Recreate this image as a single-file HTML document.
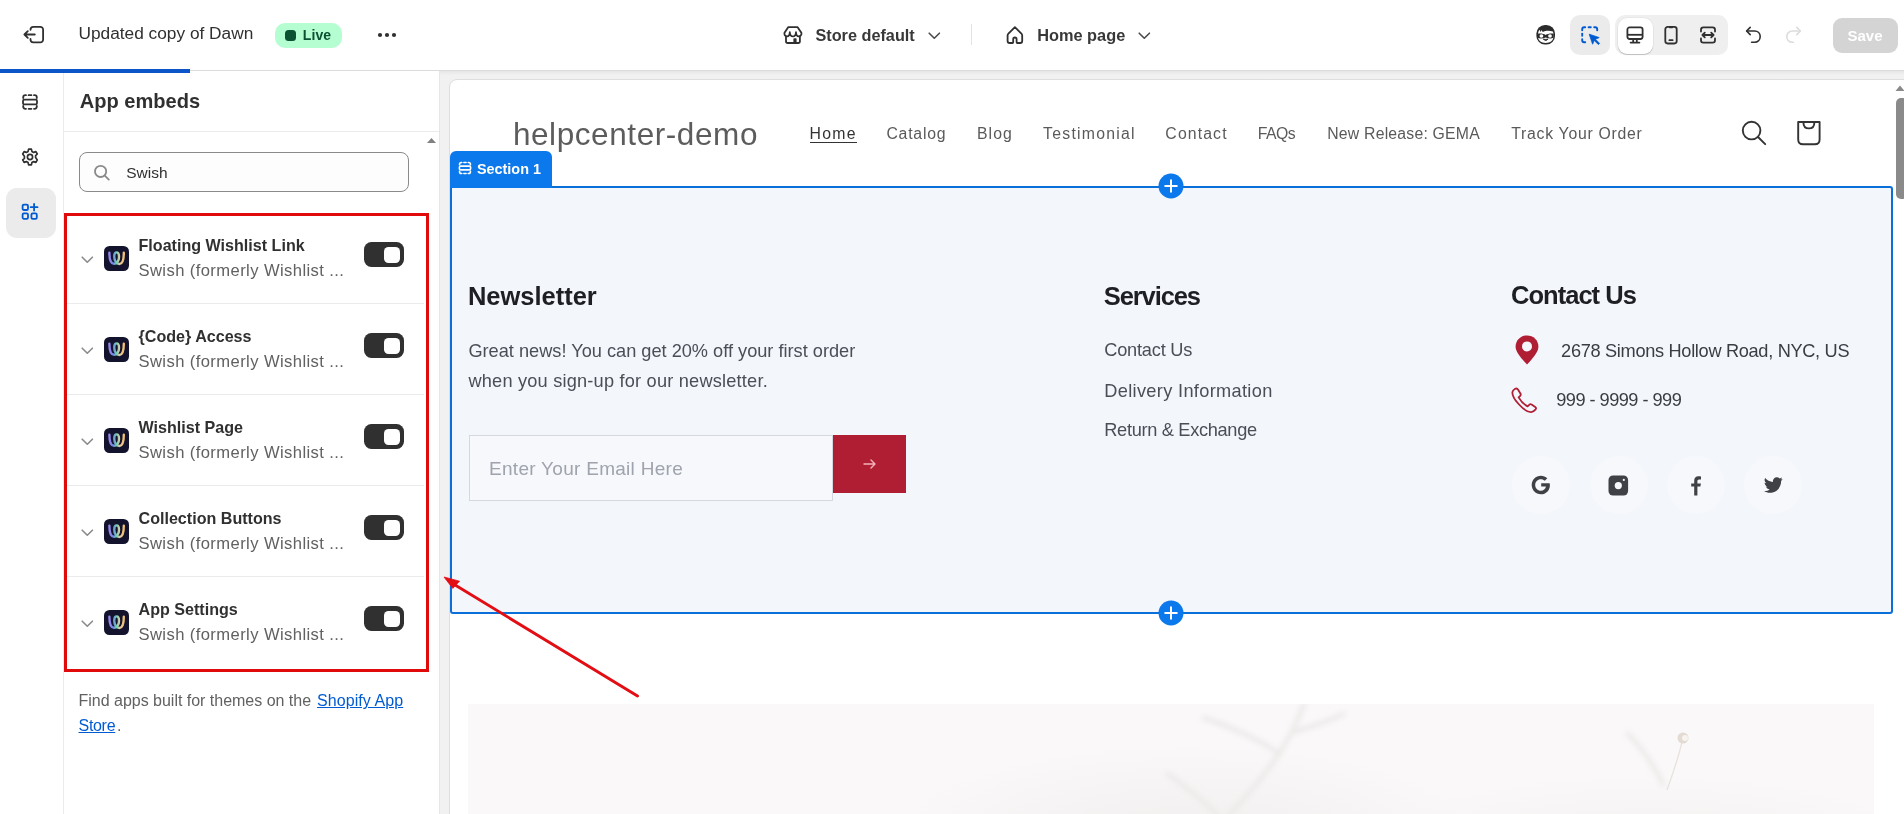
<!DOCTYPE html>
<html><head><meta charset="utf-8"><style>
html,body{margin:0;padding:0;width:1904px;height:814px;overflow:hidden;background:#fff;font-family:"Liberation Sans",sans-serif;}
.a{position:absolute;box-sizing:border-box;}
.t{position:absolute;white-space:nowrap;line-height:1;font-family:"Liberation Sans",sans-serif;}
svg{position:absolute;overflow:visible;}
</style></head><body>
<svg width="0" height="0" style="position:absolute"><defs><linearGradient id="wg" x1="0" y1="0" x2="1" y2="0"><stop offset="0" stop-color="#9c86e8"/><stop offset="0.25" stop-color="#6f86e6"/><stop offset="0.5" stop-color="#6fcfb0"/><stop offset="0.72" stop-color="#ecc9a4"/><stop offset="1" stop-color="#f0c070"/></linearGradient></defs></svg>
<!-- TOP BAR -->
<div class="a" style="left:0;top:70px;width:1904px;height:1px;background:#dcdcdc"></div>
<div class="a" style="left:0;top:69px;width:190px;height:4px;background:#0b55c8"></div>
<!-- exit icon -->
<svg style="left:23px;top:26px" width="22" height="18" viewBox="0 0 22 18"><g fill="none" stroke="#303030" stroke-width="1.8" stroke-linecap="round" stroke-linejoin="round"><path d="M7.5 3.8V3.6A2.8 2.8 0 0 1 10.3 0.9H17.3A2.8 2.8 0 0 1 20.1 3.7V13.6A2.8 2.8 0 0 1 17.3 16.4H10.3A2.8 2.8 0 0 1 7.5 13.6V13"/><path d="M11.8 8.5H1.6M4.8 5.2L1.4 8.5L4.8 11.8"/></g></svg>
<!-- live badge -->
<div class="a" style="left:275px;top:23px;width:67px;height:25px;border-radius:10px;background:#b4fed2"></div>
<div class="a" style="left:285px;top:30px;width:11px;height:11px;border-radius:3.5px;background:#0c5132"></div>
<!-- dots -->
<svg style="left:376px;top:31px" width="22" height="8"><circle cx="4" cy="4" r="2.1" fill="#303030"/><circle cx="11" cy="4" r="2.1" fill="#303030"/><circle cx="18" cy="4" r="2.1" fill="#303030"/></svg>
<!-- store icon -->
<svg style="left:783px;top:25px" width="20" height="20" viewBox="0 0 20 20"><g fill="none" stroke="#303030" stroke-width="1.8" stroke-linejoin="round"><path d="M5.2 2.2H14.6L18.4 7.8C18.9 9.9 17.4 11.3 15.6 11.3C14.0 11.3 13.2 10.2 13.0 7.2C12.8 10.4 11.7 11.4 9.9 11.4C8.2 11.4 7.0 10.4 6.8 7.2C6.6 10.2 5.8 11.3 4.2 11.3C2.4 11.3 0.9 9.9 1.5 7.8Z"/><path d="M3.0 11.2V16.2C3.0 17.2 3.7 18.0 4.8 18.0H15.1C16.2 18.0 16.9 17.2 16.9 16.2V11.2"/></g><rect x="10.4" y="13.2" width="3.2" height="5" rx="0.8" fill="#303030"/></svg>
<!-- chevron 1 -->
<svg style="left:927px;top:31px" width="15" height="10"><path d="M2.2 2.2L7.3 7.2L12.4 2.2" fill="none" stroke="#4a4a4a" stroke-width="1.6" stroke-linecap="round" stroke-linejoin="round"/></svg>
<div class="a" style="left:971px;top:24px;width:1px;height:21px;background:#e3e3e3"></div>
<!-- home icon -->
<svg style="left:1005px;top:25px" width="20" height="20" viewBox="0 0 20 20"><path d="M9.9 2.2L3.4 8.6C2.8 9.2 2.6 9.8 2.6 10.6V16.0C2.6 17.3 3.4 18.0 4.6 18.0H7.4C7.9 18.0 8.2 17.7 8.2 17.2V14.1C8.2 13.1 8.9 12.5 9.9 12.5C10.9 12.5 11.6 13.1 11.6 14.1V17.2C11.6 17.7 11.9 18.0 12.4 18.0H15.2C16.4 18.0 17.2 17.3 17.2 16.0V10.6C17.2 9.8 17.0 9.2 16.4 8.6Z" fill="none" stroke="#303030" stroke-width="1.8" stroke-linejoin="round"/></svg>
<svg style="left:1137px;top:31px" width="15" height="10"><path d="M2.2 2.2L7.3 7.2L12.4 2.2" fill="none" stroke="#4a4a4a" stroke-width="1.6" stroke-linecap="round" stroke-linejoin="round"/></svg>
<!-- robin icon -->
<svg style="left:1535.5px;top:24.8px" width="20" height="20" viewBox="0 0 20 20"><rect x="0.4" y="0" width="18.6" height="19.6" rx="8.6" fill="#2b2b2b"/><path d="M2.0 9.8C2.0 7.6 2.6 5.8 3.5 4.8L4.7 6.9L5.6 5.1L6.7 6.9C9.2 5.6 13.2 5.3 16.9 6.4C17.3 7.4 17.5 8.5 17.5 9.8V11.2C17.5 15.6 14.3 17.9 9.7 17.9C5.1 17.9 2.0 15.6 2.0 11.2Z" fill="#fff"/><path d="M1.8 8.8C4.8 8.2 7.8 9.0 9.7 10.0C11.6 9.0 14.6 8.2 17.7 8.8V12.8C15.2 14.0 12.2 13.6 9.7 12.6C7.2 13.6 4.2 14.0 1.8 12.8Z" fill="#2b2b2b"/><ellipse cx="5.4" cy="11.0" rx="1.9" ry="1.7" fill="#fff"/><ellipse cx="14.0" cy="11.0" rx="1.9" ry="1.7" fill="#fff"/><path d="M7.4 14.0C8.4 15.9 11.0 15.9 12.0 14.0C10.6 14.5 8.8 14.5 7.4 14.0Z" fill="#2b2b2b" stroke="#2b2b2b" stroke-width="0.9" stroke-linejoin="round"/></svg>
<!-- inspector button -->
<div class="a" style="left:1570px;top:15px;width:40px;height:40px;border-radius:10px;background:#ebebeb"></div>
<svg style="left:1580px;top:25px" width="22" height="22" viewBox="0 0 22 22"><g fill="none" stroke="#005bd3" stroke-width="1.9" stroke-linecap="round"><path d="M2.2 5.2V4.2C2.2 3.0 3.0 2.2 4.2 2.2H5.2"/><path d="M8.6 2.2H10.8"/><path d="M14.2 2.2H15.2C16.4 2.2 17.2 3.0 17.2 4.2V5.2"/><path d="M2.2 8.6V10.8"/><path d="M2.2 14.2V15.2C2.2 16.4 3.0 17.2 4.2 17.2H5.2"/></g><path d="M9.2 9.2L19.2 12.6L15.4 14.2L19.6 18.4L18.4 19.6L14.2 15.4L12.6 19.2Z" fill="#005bd3" stroke="#005bd3" stroke-width="0.8" stroke-linejoin="round"/></svg>
<!-- device group -->
<div class="a" style="left:1615px;top:15px;width:113px;height:40px;border-radius:10px;background:#efefef"></div>
<div class="a" style="left:1617.5px;top:17.5px;width:35.5px;height:36px;border-radius:9px;background:#fff;box-shadow:0 1px 1px rgba(0,0,0,0.18),0 0 0 0.5px rgba(0,0,0,0.06)"></div>
<svg style="left:1625px;top:25px" width="20" height="20" viewBox="0 0 20 20"><g fill="none" stroke="#303030" stroke-width="1.8" stroke-linejoin="round"><rect x="2.4" y="2.4" width="15.2" height="11.6" rx="2.2"/><path d="M2.6 9.8H17.4"/><path d="M8.2 14.4V17.4M11.8 14.4V17.4M5.6 17.6H14.4" stroke-linecap="round"/></g></svg>
<svg style="left:1661px;top:25px" width="20" height="20" viewBox="0 0 20 20"><g fill="none" stroke="#303030" stroke-width="1.8"><rect x="4.3" y="1.9" width="11.4" height="16.6" rx="2.4"/><path d="M8.4 15.2H11.6" stroke-linecap="round"/><path d="M8.6 2.6H11.4" stroke-linecap="round" stroke-width="1.4"/></g></svg>
<svg style="left:1698px;top:25px" width="20" height="20" viewBox="0 0 20 20"><g fill="none" stroke="#303030" stroke-width="1.8" stroke-linecap="round" stroke-linejoin="round"><path d="M3.0 6.6V4.8C3.0 3.3 3.9 2.4 5.4 2.4H14.6C16.1 2.4 17.0 3.3 17.0 4.8V6.6"/><path d="M3.0 13.4V15.2C3.0 16.7 3.9 17.6 5.4 17.6H14.6C16.1 17.6 17.0 16.7 17.0 15.2V13.4"/><path d="M4.4 10H15.6M6.8 7.6L4.4 10L6.8 12.4M13.2 7.6L15.6 10L13.2 12.4"/></g></svg>
<!-- undo/redo -->
<svg style="left:1744px;top:25px" width="20" height="20" viewBox="0 0 20 20"><g fill="none" stroke="#303030" stroke-width="1.6" stroke-linecap="round" stroke-linejoin="round"><path d="M6.2 2.4L2.6 6.0L6.2 9.6"/><path d="M2.8 6.0H10.6C13.8 6.0 16.2 8.4 16.2 11.6C16.2 14.8 13.8 17.2 10.6 17.2H7.6"/></g></svg>
<svg style="left:1783px;top:25px" width="20" height="20" viewBox="0 0 20 20"><g fill="none" stroke="#dcdcdc" stroke-width="1.6" stroke-linecap="round" stroke-linejoin="round"><path d="M13.8 2.4L17.4 6.0L13.8 9.6"/><path d="M17.2 6.0H9.4C6.2 6.0 3.8 8.4 3.8 11.6C3.8 14.8 6.2 17.2 9.4 17.2H10.4"/></g></svg>
<!-- save -->
<div class="a" style="left:1833px;top:18px;width:65px;height:35px;border-radius:9px;background:#d4d4d4"></div>

<!-- LEFT RAIL -->
<div class="a" style="left:63px;top:73px;width:1px;height:741px;background:#ebebeb"></div>
<svg style="left:20px;top:92px" width="20" height="20" viewBox="0 0 20 20"><g fill="none" stroke="#303030" stroke-width="1.8" stroke-linecap="round"><path d="M3.2 6.0V5.4C3.2 4.0 4.0 3.2 5.4 3.2H6.0"/><path d="M8.6 3.2H11.4"/><path d="M14.0 3.2H14.6C16.0 3.2 16.8 4.0 16.8 5.4V6.0"/><path d="M3.2 14.0V14.6C3.2 16.0 4.0 16.8 5.4 16.8H6.0"/><path d="M8.6 16.8H11.4"/><path d="M14.0 16.8H14.6C16.0 16.8 16.8 16.0 16.8 14.6V14.0"/></g><rect x="3.0" y="7.6" width="14" height="4.8" rx="1.4" fill="none" stroke="#303030" stroke-width="1.8"/></svg>
<svg style="left:20px;top:147px" width="20" height="20" viewBox="0 0 20 20"><g fill="none" stroke="#303030" stroke-width="1.7" stroke-linejoin="round"><path d="M8.6 2.1H11.4L11.9 4.4L13.7 5.4L15.9 4.6L17.3 7.0L15.6 8.6V10.6L17.3 12.9L15.9 15.4L13.7 14.6L11.9 15.6L11.4 17.9H8.6L8.1 15.6L6.3 14.6L4.1 15.4L2.7 12.9L4.4 11.4V9.2L2.7 7.0L4.1 4.6L6.3 5.4L8.1 4.4Z"/><circle cx="10" cy="10" r="2.6"/></g></svg>
<div class="a" style="left:6px;top:188px;width:50px;height:50px;border-radius:11px;background:#ebebeb"></div>
<svg style="left:20px;top:202px" width="20" height="20" viewBox="0 0 20 20"><g fill="none" stroke="#005bd3" stroke-width="1.8" stroke-linejoin="round"><rect x="2.6" y="2.6" width="5.4" height="5.4" rx="1.3"/><rect x="2.6" y="11.4" width="5.4" height="5.4" rx="1.3"/><rect x="11.4" y="11.4" width="5.4" height="5.4" rx="1.3"/><path d="M14.1 1.8V8.6M10.7 5.2H17.5" stroke-linecap="round"/></g></svg>

<!-- PANEL -->
<div class="a" style="left:64px;top:131px;width:375px;height:1px;background:#ebebeb"></div>
<svg style="left:426px;top:137px" width="11" height="7"><path d="M1 6L5.5 1L10 6Z" fill="#808080"/></svg>
<div class="a" style="left:79px;top:152px;width:330px;height:40px;border-radius:8px;border:1px solid #8a8a8a;background:#fdfdfd"></div>
<svg style="left:92px;top:163px" width="20" height="20" viewBox="0 0 20 20"><g fill="none" stroke="#8a8a8a" stroke-width="1.8" stroke-linecap="round"><circle cx="8.6" cy="8.4" r="5.6"/><path d="M12.8 12.6L16.8 16.6"/></g></svg>
<!-- items -->
<svg style="left:80px;top:255px" width="15" height="10"><path d="M2.2 2.2L7.3 7.2L12.4 2.2" fill="none" stroke="#8a8a8a" stroke-width="1.6" stroke-linecap="round" stroke-linejoin="round"/></svg>
<svg style="left:104px;top:246px" width="25" height="25" viewBox="0 0 25 25"><rect width="25" height="25" rx="5.5" fill="#13132e"/><path d="M5.4 6.8C5.4 13 6.8 17.8 10 17.8C12.6 17.8 15.0 15.2 15.0 11.0C15.0 8.2 13.9 6.4 12.6 6.4C11.2 6.4 10.2 8.0 10.2 10.4C10.2 15.0 12.6 18.0 15.4 18.0C18.6 18.0 19.8 13.2 19.8 6.8" fill="none" stroke="url(#wg)" stroke-width="2.4" stroke-linecap="round" stroke-linejoin="round"/></svg>
<div class="a" style="left:364px;top:242px;width:40px;height:25px;border-radius:7.5px;background:#303030"></div>
<div class="a" style="left:384px;top:247px;width:15.5px;height:15.5px;border-radius:4.5px;background:#fff"></div>
<div class="a" style="left:67px;top:303px;width:357px;height:1px;background:#ebebeb"></div>
<svg style="left:80px;top:346px" width="15" height="10"><path d="M2.2 2.2L7.3 7.2L12.4 2.2" fill="none" stroke="#8a8a8a" stroke-width="1.6" stroke-linecap="round" stroke-linejoin="round"/></svg>
<svg style="left:104px;top:337px" width="25" height="25" viewBox="0 0 25 25"><rect width="25" height="25" rx="5.5" fill="#13132e"/><path d="M5.4 6.8C5.4 13 6.8 17.8 10 17.8C12.6 17.8 15.0 15.2 15.0 11.0C15.0 8.2 13.9 6.4 12.6 6.4C11.2 6.4 10.2 8.0 10.2 10.4C10.2 15.0 12.6 18.0 15.4 18.0C18.6 18.0 19.8 13.2 19.8 6.8" fill="none" stroke="url(#wg)" stroke-width="2.4" stroke-linecap="round" stroke-linejoin="round"/></svg>
<div class="a" style="left:364px;top:333px;width:40px;height:25px;border-radius:7.5px;background:#303030"></div>
<div class="a" style="left:384px;top:338px;width:15.5px;height:15.5px;border-radius:4.5px;background:#fff"></div>
<div class="a" style="left:67px;top:394px;width:357px;height:1px;background:#ebebeb"></div>
<svg style="left:80px;top:437px" width="15" height="10"><path d="M2.2 2.2L7.3 7.2L12.4 2.2" fill="none" stroke="#8a8a8a" stroke-width="1.6" stroke-linecap="round" stroke-linejoin="round"/></svg>
<svg style="left:104px;top:428px" width="25" height="25" viewBox="0 0 25 25"><rect width="25" height="25" rx="5.5" fill="#13132e"/><path d="M5.4 6.8C5.4 13 6.8 17.8 10 17.8C12.6 17.8 15.0 15.2 15.0 11.0C15.0 8.2 13.9 6.4 12.6 6.4C11.2 6.4 10.2 8.0 10.2 10.4C10.2 15.0 12.6 18.0 15.4 18.0C18.6 18.0 19.8 13.2 19.8 6.8" fill="none" stroke="url(#wg)" stroke-width="2.4" stroke-linecap="round" stroke-linejoin="round"/></svg>
<div class="a" style="left:364px;top:424px;width:40px;height:25px;border-radius:7.5px;background:#303030"></div>
<div class="a" style="left:384px;top:429px;width:15.5px;height:15.5px;border-radius:4.5px;background:#fff"></div>
<div class="a" style="left:67px;top:485px;width:357px;height:1px;background:#ebebeb"></div>
<svg style="left:80px;top:528px" width="15" height="10"><path d="M2.2 2.2L7.3 7.2L12.4 2.2" fill="none" stroke="#8a8a8a" stroke-width="1.6" stroke-linecap="round" stroke-linejoin="round"/></svg>
<svg style="left:104px;top:519px" width="25" height="25" viewBox="0 0 25 25"><rect width="25" height="25" rx="5.5" fill="#13132e"/><path d="M5.4 6.8C5.4 13 6.8 17.8 10 17.8C12.6 17.8 15.0 15.2 15.0 11.0C15.0 8.2 13.9 6.4 12.6 6.4C11.2 6.4 10.2 8.0 10.2 10.4C10.2 15.0 12.6 18.0 15.4 18.0C18.6 18.0 19.8 13.2 19.8 6.8" fill="none" stroke="url(#wg)" stroke-width="2.4" stroke-linecap="round" stroke-linejoin="round"/></svg>
<div class="a" style="left:364px;top:515px;width:40px;height:25px;border-radius:7.5px;background:#303030"></div>
<div class="a" style="left:384px;top:520px;width:15.5px;height:15.5px;border-radius:4.5px;background:#fff"></div>
<div class="a" style="left:67px;top:576px;width:357px;height:1px;background:#ebebeb"></div>
<svg style="left:80px;top:619px" width="15" height="10"><path d="M2.2 2.2L7.3 7.2L12.4 2.2" fill="none" stroke="#8a8a8a" stroke-width="1.6" stroke-linecap="round" stroke-linejoin="round"/></svg>
<svg style="left:104px;top:610px" width="25" height="25" viewBox="0 0 25 25"><rect width="25" height="25" rx="5.5" fill="#13132e"/><path d="M5.4 6.8C5.4 13 6.8 17.8 10 17.8C12.6 17.8 15.0 15.2 15.0 11.0C15.0 8.2 13.9 6.4 12.6 6.4C11.2 6.4 10.2 8.0 10.2 10.4C10.2 15.0 12.6 18.0 15.4 18.0C18.6 18.0 19.8 13.2 19.8 6.8" fill="none" stroke="url(#wg)" stroke-width="2.4" stroke-linecap="round" stroke-linejoin="round"/></svg>
<div class="a" style="left:364px;top:606px;width:40px;height:25px;border-radius:7.5px;background:#303030"></div>
<div class="a" style="left:384px;top:611px;width:15.5px;height:15.5px;border-radius:4.5px;background:#fff"></div>
<div class="a" style="left:64px;top:213px;width:365px;height:459px;border:3px solid #e00a0a"></div>

<!-- PREVIEW -->
<div class="a" style="left:439px;top:71px;width:1465px;height:743px;background:#f1f1f1"></div>
<div class="a" style="left:439px;top:71px;width:1465px;height:4px;background:linear-gradient(#e6e6e6,#f1f1f1)"></div>
<div class="a" style="left:439px;top:71px;width:1px;height:743px;background:#e6e6e6"></div>
<div class="a" style="left:449px;top:79px;width:1470px;height:760px;border-radius:8px;background:#fff;border:1px solid #dedede"></div>
<!-- scrollbar -->
<svg style="left:1894px;top:84px" width="12" height="8"><path d="M1.5 7L6 1.5L10.5 7Z" fill="#8a8a8a"/></svg>
<div class="a" style="left:1896px;top:98px;width:12px;height:101px;border-radius:5px;background:#8a8a8a"></div>
<!-- store header icons -->
<svg style="left:1740px;top:119px" width="28" height="28" viewBox="0 0 28 28"><g fill="none" stroke="#333" stroke-width="1.9" stroke-linecap="round"><circle cx="11.6" cy="11.6" r="8.8"/><path d="M18.0 18.0L25.2 25.2"/></g></svg>
<svg style="left:1795px;top:119px" width="28" height="28" viewBox="0 0 28 28"><path d="M3.2 3.0H24.6V20.4C24.6 23.4 22.8 25.2 19.8 25.2H8.0C5.0 25.2 3.2 23.4 3.2 20.4Z M8.4 3.2C8.4 7.0 10.6 9.4 13.9 9.4C17.2 9.4 19.4 7.0 19.4 3.2" fill="none" stroke="#333" stroke-width="1.9" stroke-linejoin="round"/></svg>
<div class="a" style="left:810px;top:142px;width:47px;height:1.3px;background:#333"></div>

<!-- SECTION -->
<div class="a" style="left:450px;top:186px;width:1443px;height:428px;border:2px solid #0a6fd8;border-radius:0 3px 3px 3px;background:#f3f6fb"></div>
<div class="a" style="left:450px;top:151px;width:102px;height:37px;border-radius:6px 6px 0 0;background:#0b78ec"></div>
<svg style="left:457px;top:160px" width="16" height="16" viewBox="0 0 20 20"><g fill="none" stroke="#fff" stroke-width="2" stroke-linecap="round"><path d="M3.2 6.0V5.4C3.2 4.0 4.0 3.2 5.4 3.2H6.0"/><path d="M8.6 3.2H11.4"/><path d="M14.0 3.2H14.6C16.0 3.2 16.8 4.0 16.8 5.4V6.0"/><path d="M3.2 14.0V14.6C3.2 16.0 4.0 16.8 5.4 16.8H6.0"/><path d="M8.6 16.8H11.4"/><path d="M14.0 16.8H14.6C16.0 16.8 16.8 16.0 16.8 14.6V14.0"/></g><rect x="3.0" y="7.6" width="14" height="4.8" rx="1.4" fill="none" stroke="#fff" stroke-width="2"/></svg>
<svg style="left:1158px;top:173.2px" width="26" height="26" viewBox="0 0 26 26"><circle cx="13" cy="13" r="12.5" fill="#0b78ec"/><path d="M13 7.2V18.8M7.2 13H18.8" stroke="#fff" stroke-width="2" stroke-linecap="round"/></svg>
<svg style="left:1158px;top:599.8px" width="26" height="26" viewBox="0 0 26 26"><circle cx="13" cy="13" r="12.5" fill="#0b78ec"/><path d="M13 7.2V18.8M7.2 13H18.8" stroke="#fff" stroke-width="2" stroke-linecap="round"/></svg>
<!-- email -->
<div class="a" style="left:469px;top:435px;width:364px;height:66px;border:1px solid #d5d8de;background:#f7f8fb"></div>
<div class="a" style="left:833px;top:435px;width:73px;height:58px;background:#b01e34"></div>
<svg style="left:862px;top:457px" width="16" height="14"><path d="M2 7H13M9 3L13 7L9 11" fill="none" stroke="#f3b3bd" stroke-width="1.4" stroke-linecap="round" stroke-linejoin="round"/></svg>
<!-- pin & phone -->
<svg style="left:1515px;top:335px" width="24" height="30" viewBox="0 0 24 30"><path d="M12 0.4C5.6 0.4 0.6 5.3 0.6 11.4C0.6 15.9 3.6 20.4 12 29.6C20.4 20.4 23.4 15.9 23.4 11.4C23.4 5.3 18.4 0.4 12 0.4Z" fill="#b01e34"/><circle cx="12" cy="11.4" r="5" fill="#f3f6fb"/></svg>
<svg style="left:1511px;top:387px" width="27" height="27" viewBox="0 0 27 27"><path d="M4.2 1.8C3.0 2.5 1.6 3.6 1.4 5.2C1.2 8.0 3.6 12.6 7.6 17.0C11.8 21.6 17.2 25.4 20.2 25.2C21.8 25.1 23.4 23.8 24.6 22.4C25.2 21.6 25.0 20.6 24.2 20.0L20.6 17.6C19.8 17.0 18.8 17.2 18.2 17.8L16.6 19.4C13.2 17.6 9.4 13.6 7.6 10.4L9.2 8.8C9.8 8.2 9.9 7.2 9.4 6.4L7.0 2.6C6.4 1.6 5.2 1.3 4.2 1.8Z" fill="none" stroke="#b01e34" stroke-width="1.8" stroke-linejoin="round"/></svg>
<!-- socials -->
<div class="a" style="left:1512px;top:456px;width:58px;height:58px;border-radius:50%;background:#f7f8fb"></div>
<div class="a" style="left:1590px;top:456px;width:58px;height:58px;border-radius:50%;background:#f7f8fb"></div>
<div class="a" style="left:1667px;top:456px;width:58px;height:58px;border-radius:50%;background:#f7f8fb"></div>
<div class="a" style="left:1744px;top:456px;width:58px;height:58px;border-radius:50%;background:#f7f8fb"></div>
<svg style="left:1531px;top:475px" width="20" height="20" viewBox="0 0 20 20"><path d="M18.6 8.2H10.2V11.6H15.0C14.4 14.2 12.4 15.8 9.9 15.8C6.6 15.8 4.2 13.2 4.2 10C4.2 6.8 6.6 4.2 9.9 4.2C11.4 4.2 12.8 4.8 13.8 5.8L16.3 3.3C14.6 1.7 12.4 0.7 9.9 0.7C4.8 0.7 0.7 4.9 0.7 10C0.7 15.1 4.8 19.3 9.9 19.3C15.0 19.3 18.9 15.4 18.9 10.2C18.9 9.5 18.8 8.8 18.6 8.2Z" fill="#3f4147"/></svg>
<svg style="left:1608px;top:475px" width="21" height="21" viewBox="0 0 21 21"><rect x="0.5" y="0.5" width="19.6" height="20" rx="4.6" fill="#3f4147"/><circle cx="10.3" cy="10.6" r="3.6" fill="#f7f8fb"/><circle cx="15.8" cy="4.9" r="1.1" fill="#f7f8fb"/></svg>
<svg style="left:1690px;top:475px" width="12" height="21" viewBox="0 0 12 21"><path d="M7.4 20.4V11.6H10.4L10.9 8.4H7.4V6.4C7.4 5.4 7.8 4.6 9.2 4.6H11.0V1.5C10.4 1.4 9.4 1.3 8.4 1.3C5.8 1.3 4.2 2.9 4.2 5.9V8.4H1.2V11.6H4.2V20.4Z" fill="#3f4147"/></svg>
<svg style="left:1764px;top:476px" width="20" height="18" viewBox="0 0 20 18"><path d="M18.6 3.0C17.9 3.3 17.2 3.5 16.4 3.6C17.2 3.1 17.8 2.4 18.1 1.5C17.3 1.9 16.5 2.3 15.6 2.4C14.9 1.6 13.9 1.2 12.8 1.2C10.6 1.2 8.9 3.0 8.9 5.1C8.9 5.4 8.9 5.7 9.0 6.0C5.8 5.8 3.0 4.3 1.1 2.0C0.8 2.6 0.6 3.2 0.6 4.0C0.6 5.3 1.3 6.5 2.4 7.2C1.7 7.2 1.1 7.0 0.6 6.7C0.6 8.6 2.0 10.2 3.7 10.6C3.4 10.7 3.0 10.7 2.6 10.7C2.4 10.7 2.1 10.7 1.9 10.6C2.4 12.2 3.9 13.3 5.6 13.4C4.3 14.4 2.6 15.0 0.8 15.0C0.5 15.0 0.2 15.0 0 15.0C1.7 16.1 3.8 16.8 6.0 16.8C13.2 16.8 17.1 10.8 17.1 5.6V5.1C17.8 4.5 18.3 3.8 18.6 3.0Z" fill="#3f4147"/></svg>
<!-- image -->
<div class="a" style="left:468px;top:704px;width:1406px;height:110px;background:#faf8f8;overflow:hidden">
  <div class="a" style="left:420px;top:40px;width:600px;height:200px;border-radius:50%;background:radial-gradient(closest-side,rgba(238,235,235,0.8),rgba(250,248,248,0))"></div>
  <div class="a" style="left:900px;top:70px;width:560px;height:150px;border-radius:50%;background:radial-gradient(closest-side,rgba(240,237,237,0.7),rgba(250,248,248,0))"></div>
  <svg style="left:0;top:0;filter:blur(2.5px)" width="1406" height="110"><g fill="none" stroke="#ece9e9" stroke-width="4.5" stroke-linecap="round"><path d="M760 112C790 80 820 45 836 0M812 50C790 35 760 22 736 14M826 28C845 22 860 18 875 10M700 70C720 85 740 100 750 112"/><path d="M1160 30C1175 45 1185 60 1195 80"/></g></svg>
  <svg style="left:0;top:0" width="1406" height="110"><path d="M1214 38C1210 55 1204 72 1199 86" stroke="#e8e2de" stroke-width="1.3" fill="none"/><circle cx="1215" cy="34" r="5.5" fill="#e3dbd3"/><circle cx="1217" cy="34" r="3" fill="#f7f3ef"/></svg>
</div>
<!-- RED ARROW -->
<svg style="left:0;top:0" width="1904" height="814"><path d="M637.5 696L451 582.5" stroke="#e30d14" stroke-width="2.9" stroke-linecap="round"/><path d="M444 577L459.5 581.2L452.8 588.4Z" fill="#e30d14" stroke="#e30d14" stroke-width="0.8" stroke-linejoin="round"/></svg>

<div style="position:absolute;left:0;top:0;width:1904px;height:814px;will-change:transform">
<div class="t" style="left:78.46px;top:25.30px;font-size:17.30px;color:#303030;">Updated copy of Dawn</div>
<div class="t" style="left:302.86px;top:27.60px;font-size:14.00px;color:#0c5132;font-weight:bold;letter-spacing:0.095px;">Live</div>
<div class="t" style="left:815.43px;top:26.99px;font-size:16.25px;color:#383838;font-weight:bold;">Store default</div>
<div class="t" style="left:1037.22px;top:26.92px;font-size:16.33px;color:#383838;font-weight:bold;">Home page</div>
<div class="t" style="left:1847.50px;top:27.66px;font-size:14.99px;color:#ffffff;font-weight:bold;">Save</div>
<div class="t" style="left:79.80px;top:91.45px;font-size:20.06px;color:#303030;font-weight:bold;">App embeds</div>
<div class="t" style="left:126.27px;top:164.84px;font-size:15.48px;color:#303030;">Swish</div>
<div class="t" style="left:138.53px;top:237.31px;font-size:16.10px;color:#303030;font-weight:bold;">Floating Wishlist Link</div>
<div class="t" style="left:138.50px;top:262.89px;font-size:16.60px;color:#616161;letter-spacing:0.404px;">Swish (formerly Wishlist ...</div>
<div class="t" style="left:138.53px;top:328.31px;font-size:16.10px;color:#303030;font-weight:bold;">{Code} Access</div>
<div class="t" style="left:138.50px;top:353.89px;font-size:16.60px;color:#616161;letter-spacing:0.404px;">Swish (formerly Wishlist ...</div>
<div class="t" style="left:138.53px;top:419.31px;font-size:16.10px;color:#303030;font-weight:bold;">Wishlist Page</div>
<div class="t" style="left:138.50px;top:444.89px;font-size:16.60px;color:#616161;letter-spacing:0.404px;">Swish (formerly Wishlist ...</div>
<div class="t" style="left:138.53px;top:510.31px;font-size:16.10px;color:#303030;font-weight:bold;">Collection Buttons</div>
<div class="t" style="left:138.50px;top:535.89px;font-size:16.60px;color:#616161;letter-spacing:0.404px;">Swish (formerly Wishlist ...</div>
<div class="t" style="left:138.53px;top:601.32px;font-size:16.10px;color:#303030;font-weight:bold;">App Settings</div>
<div class="t" style="left:138.50px;top:626.89px;font-size:16.60px;color:#616161;letter-spacing:0.404px;">Swish (formerly Wishlist ...</div>
<div class="t" style="left:78.54px;top:693.40px;font-size:16.00px;color:#616161;letter-spacing:-0.016px;">Find apps built for themes on the</div>
<div class="t" style="left:317.04px;top:693.40px;font-size:16.00px;color:#005bd3;letter-spacing:0.072px;text-decoration:underline;">Shopify App</div>
<div class="t" style="left:78.54px;top:718.40px;font-size:16.00px;color:#005bd3;letter-spacing:-0.311px;text-decoration:underline;">Store</div>
<div class="t" style="left:117.04px;top:718.40px;font-size:16.00px;color:#616161;">.</div>
<div class="t" style="left:512.91px;top:119.42px;font-size:31.50px;color:#5c5c5c;letter-spacing:0.579px;">helpcenter-demo</div>
<div class="t" style="left:809.55px;top:125.57px;font-size:15.80px;color:#333333;letter-spacing:1.285px;">Home</div>
<div class="t" style="left:886.45px;top:125.57px;font-size:15.80px;color:#5a5a5a;letter-spacing:0.773px;">Catalog</div>
<div class="t" style="left:977.05px;top:125.57px;font-size:15.80px;color:#5a5a5a;letter-spacing:1.026px;">Blog</div>
<div class="t" style="left:1043.05px;top:125.57px;font-size:15.80px;color:#5a5a5a;letter-spacing:1.257px;">Testimonial</div>
<div class="t" style="left:1165.35px;top:125.57px;font-size:15.80px;color:#5a5a5a;letter-spacing:1.125px;">Contact</div>
<div class="t" style="left:1257.85px;top:125.57px;font-size:15.80px;color:#5a5a5a;letter-spacing:-0.569px;">FAQs</div>
<div class="t" style="left:1327.25px;top:125.57px;font-size:15.80px;color:#5a5a5a;letter-spacing:0.202px;">New Release: GEMA</div>
<div class="t" style="left:1511.25px;top:125.57px;font-size:15.80px;color:#5a5a5a;letter-spacing:0.720px;">Track Your Order</div>
<div class="t" style="left:476.93px;top:161.74px;font-size:14.42px;color:#ffffff;font-weight:bold;">Section 1</div>
<div class="t" style="left:467.97px;top:283.82px;font-size:25.50px;color:#1d1f24;font-weight:bold;letter-spacing:-0.019px;">Newsletter</div>
<div class="t" style="left:468.41px;top:341.53px;font-size:18.20px;color:#4a4e57;">Great news! You can get 20% off your first order</div>
<div class="t" style="left:468.41px;top:371.53px;font-size:18.20px;color:#4a4e57;letter-spacing:0.204px;">when you sign-up for our newsletter.</div>
<div class="t" style="left:489.06px;top:459.15px;font-size:19.00px;color:#9ea3ad;letter-spacing:0.283px;">Enter Your Email Here</div>
<div class="t" style="left:1103.87px;top:283.62px;font-size:25.50px;color:#1d1f24;font-weight:bold;letter-spacing:-1.118px;">Services</div>
<div class="t" style="left:1104.31px;top:341.33px;font-size:18.20px;color:#4a4e57;letter-spacing:-0.214px;">Contact Us</div>
<div class="t" style="left:1104.31px;top:381.53px;font-size:18.20px;color:#4a4e57;letter-spacing:0.330px;">Delivery Information</div>
<div class="t" style="left:1104.31px;top:421.33px;font-size:18.20px;color:#4a4e57;letter-spacing:-0.308px;">Return &amp; Exchange</div>
<div class="t" style="left:1511.07px;top:283.43px;font-size:25.50px;color:#1d1f24;font-weight:bold;letter-spacing:-0.977px;">Contact Us</div>
<div class="t" style="left:1561.11px;top:341.53px;font-size:18.20px;color:#3a3d44;letter-spacing:-0.316px;">2678 Simons Hollow Road, NYC, US</div>
<div class="t" style="left:1556.21px;top:391.33px;font-size:18.20px;color:#3a3d44;letter-spacing:-0.524px;">999 - 9999 - 999</div>
</div>
</body></html>
